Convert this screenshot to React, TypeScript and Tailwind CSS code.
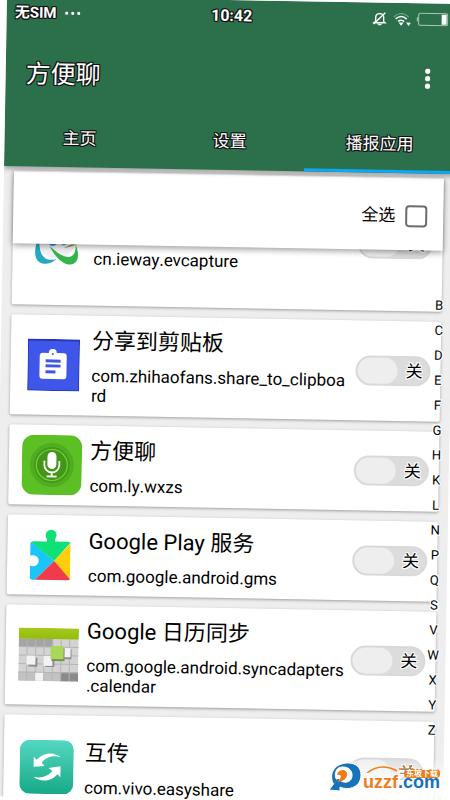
import React from "react";

const outlineDark =
  "[text-shadow:1px_0_#111,-1px_0_#111,0_1px_#111,0_-1px_#111,1px_1px_#111,-1px_-1px_#111,1px_-1px_#111,-1px_1px_#111]";
const outlineLight =
  "[text-shadow:1px_0_#fff,-1px_0_#fff,0_1px_#fff,0_-1px_#fff,1px_1px_#fff,-1px_-1px_#fff,1px_-1px_#fff,-1px_1px_#fff]";

const tabs = ["主页", "设置", "播报应用"];

const letters = "BCDEFGHKLNPQSVWXYZ".split("");

const CaptureIcon = () => (
  <svg viewBox="0 0 60 60" className="h-[60px] w-[60px]" aria-hidden="true">
    <circle cx="31" cy="30" r="20" fill="#eef0f1" />
    <path d="M5 24Q12 37 22 36Q11 33 5 24Z" fill="#d5702e" />
    <path d="M57 23Q50 35 38 40Q51 37 57 33Z" fill="#a98532" />
    <path d="M14 26C7 43 8 55 19 56C24 56 28 54 31 51C18 55 12 46 14 26Z" fill="#25a9bd" />
    <path d="M24 38C32 54 43 59 49 55C54 51 53 44 50 36C51 51 41 54 24 38Z" fill="#35b34c" />
    <path d="M23 36Q27 40 31 36L29 33H24Z" fill="#3490d5" />
    <path d="M36 34h4v3h-4z" fill="#3490d5" />
  </svg>
);

const ClipboardIcon = () => (
  <svg viewBox="0 0 52 52" className="h-[52px] w-[52px]" aria-hidden="true">
    <rect width="52" height="52" fill="#2536b4" />
    <rect x="1" y="2" width="50" height="49" fill="#3f56ea" />
    <path
      d="M15 14h6a4 4 0 0 1 8 0h7a3 3 0 0 1 3 3v20a3 3 0 0 1-3 3H15a3 3 0 0 1-3-3V17a3 3 0 0 1 3-3Z"
      fill="#fff"
    />
    <circle cx="25" cy="15" r="1" fill="#3f56ea" />
    <path d="M18 22h15M18 27h15M18 33h10" stroke="#3f56ea" strokeWidth="3" />
  </svg>
);

const MicIcon = () => (
  <svg viewBox="0 0 60 60" className="h-[60px] w-[60px]" aria-hidden="true">
    <rect width="60" height="60" rx="12" fill="#5cbf24" />
    <circle cx="30" cy="30" r="22" fill="#50ac20" />
    <circle cx="30" cy="30" r="18" fill="#449a1b" />
    <circle cx="30" cy="30" r="15.500" fill="#429719" stroke="#76cf3b" strokeWidth="1.200" />
    <rect x="25.500" y="17" width="9" height="17" rx="4.500" fill="#fff" />
    <path d="M22.500 26v4a7.500 7.500 0 0 0 15 0v-4M30 37.500v4M25 41.500h10" fill="none" stroke="#fff" strokeWidth="1.800" />
  </svg>
);

const PlayServicesIcon = () => (
  <svg viewBox="0 0 42 52" className="h-[52px] w-[42px]" aria-hidden="true">
    <path
      d="M1 15a2 2 0 0 1 1-2L25 32L6 51H3a2 2 0 0 1-2-2V37q1 .5 3 .5a5.500 5.500 0 1 0 0-11q-2 0-3 .5Z"
      fill="#19c5fb"
    />
    <path d="M2 13.500q1-1 2-1H17.500V10a5.500 5.500 0 1 1 8 0v2.500H39q1 0 2 1L25 32Z" fill="#10e078" />
    <path d="M41 14v35q0 1-1 2L25 32Z" fill="#fdce0b" />
    <path d="M6 51L25 32L41 50q-1 1-2 1Z" fill="#f13a4c" />
  </svg>
);

const CalendarSyncIcon = () => (
  <svg viewBox="0 0 60 54" className="h-[54px] w-[60px]" aria-hidden="true">
    <defs>
      <linearGradient id="calGreen" x1="0" y1="0" x2="0" y2="1">
        <stop offset="0" stopColor="#a5c91b" />
        <stop offset="1" stopColor="#93bd0c" />
      </linearGradient>
    </defs>
    <rect y="1" width="60" height="52" rx="1" fill="#d2d3d2" />
    <rect y="11" width="34" height="8" fill="#a3a4a3" />
    <rect x="42" y="44" width="18" height="9" fill="#8a8b8a" />
    <rect y="44" width="42" height="9" fill="#c1c2c1" />
    <path
      d="M0 19h60M0 27.500h60M0 36h60M0 44.500h60M8.500 11v42M17 11v42M25.500 11v42M34 11v42M42.500 11v42M51 11v42"
      stroke="#b4b5b4"
      strokeWidth="1"
    />
    <path d="M10 30h9v9h-9zM27 30h9v9h-9zM45 21h8v10h-8z" fill="#8d8e8d" />
    <path d="M8 28h9v9H8zM25 28h9v10h-9zM44 20h8v9h-8zM17 45h8v8h-8z" fill="#f2f3f2" />
    <rect x="33" y="20" width="13" height="13" fill="#7b8f5c" />
    <rect x="32" y="18" width="13" height="13" fill="#a9d759" />
    <rect width="60" height="11" rx="1" fill="url(#calGreen)" />
  </svg>
);

const EasyShareIcon = () => (
  <svg viewBox="0 0 54 54" className="h-[54px] w-[54px]" aria-hidden="true">
    <defs>
      <linearGradient id="shareTeal" x1="0" y1="0" x2="0" y2="1">
        <stop offset="0" stopColor="#55d7c1" />
        <stop offset="1" stopColor="#16aa87" />
      </linearGradient>
    </defs>
    <rect width="54" height="54" rx="10" fill="url(#shareTeal)" />
    <path d="M14 17l3 3C23 13 33 11 41 17C33 15 26 17 22 23l3 3L14 27Z" fill="#fff" />
    <path d="M41 38l-3-3C32 42 22 44 14 38C22 40 29 37 33 32l-4-3L41 27Z" fill="#fff" transform="translate(0 -1)" />
  </svg>
);

const apps = [
  { name: "EV录屏", id: "cn.ieway.evcapture", icon: <CaptureIcon />, size: "min-h-[134px]" },
  { name: "分享到剪贴板", id: "com.zhihaofans.share_to_clipboard", icon: <ClipboardIcon />, size: "" },
  { name: "方便聊", id: "com.ly.wxzs", icon: <MicIcon />, size: "" },
  { name: "Google Play 服务", id: "com.google.android.gms", icon: <PlayServicesIcon />, size: "" },
  { name: "Google 日历同步", id: "com.google.android.syncadapters.calendar", icon: <CalendarSyncIcon />, size: "" },
  { name: "互传", id: "com.vivo.easyshare", icon: <EasyShareIcon />, size: "min-h-[104px]" },
];

// A line may also end right before a dot, which break-all alone does not allow
const PackageName = ({ id }: { id: string }) => (
  <p className="break-all text-[17px] leading-5">
    {id.split(".").map((part, i) => (
      <React.Fragment key={i}>
        {i > 0 && <wbr />}
        {i > 0 ? `.${part}` : part}
      </React.Fragment>
    ))}
  </p>
);

const StatusBar = () => (
  <div className="grid h-8 grid-cols-3 items-center px-2 text-white">
    <div className="flex items-center gap-2">
      <span className={`text-[15px] font-bold ${outlineDark}`}>无SIM</span>
      <svg viewBox="0 0 16 4" className="h-1 w-4" fill="currentColor" aria-hidden="true">
        <circle cx="2" cy="2" r="1.600" />
        <circle cx="8" cy="2" r="1.600" />
        <circle cx="14" cy="2" r="1.600" />
      </svg>
    </div>
    <span className={`text-center text-base font-bold ${outlineDark}`}>10:42</span>
    <div className="flex items-center justify-end gap-1.5">
      <svg viewBox="0 0 14 14" className="h-3.5 w-3.5" fill="none" stroke="currentColor" aria-hidden="true">
        <path d="M3 10V6Q3 2 7 2Q11 2 11 6V10L12.500 11H1.500Z" strokeWidth="1.400" />
        <path d="M1 12.500L12.500 1" strokeWidth="1.400" />
        <path d="M5.500 12.500h3l-1.500 1.200Z" fill="currentColor" />
      </svg>
      <svg viewBox="0 0 18 14" className="h-3.5 w-[18px]" fill="none" stroke="currentColor" aria-hidden="true">
        <path d="M1 5Q8.500-2 16 5" strokeWidth="1" opacity="0.400" />
        <path d="M3 7Q8.500 2 14 7M5.500 9.500Q8.500 7 11.500 9.500" strokeWidth="1.600" />
        <path d="M7 11h3l-1.500 2ZM14.500 11h3l-1.500 2Z" fill="currentColor" />
      </svg>
      <svg viewBox="0 0 32 14" className="h-3.5 w-8" fill="none" aria-hidden="true">
        <rect x="2" y="1" width="29" height="12" rx="1.500" stroke="#a9c7b5" />
        <path d="M.5 5v4" stroke="#a9c7b5" strokeWidth="1.500" />
        <rect x="25" y="2" width="5" height="10" fill="#fff" />
      </svg>
    </div>
  </div>
);

const Header = () => (
  <header className="relative z-20 bg-[#2c704b] shadow-[0_3px_4px_rgba(0,0,0,0.3)]">
    <StatusBar />
    <div className="flex h-20 items-center justify-between px-5 pt-2">
      <h1 className={`pt-1 text-[25px] leading-8 text-white ${outlineDark}`}>方便聊</h1>
      <button type="button" aria-label="更多" className="flex h-6 w-4 items-center justify-center text-white">
        <svg viewBox="0 0 6 22" className="h-[22px] w-1.5" fill="currentColor" aria-hidden="true">
          <circle cx="3" cy="2.700" r="2.600" />
          <circle cx="3" cy="10.200" r="2.600" />
          <circle cx="3" cy="17.700" r="2.600" />
        </svg>
      </button>
    </div>
    <nav className="grid h-[58px] grid-cols-3">
      {tabs.map((tab, i) => (
        <button
          key={tab}
          type="button"
          className={`border-b-[3px] pt-1 text-[17px] text-white ${outlineDark} ${
            i === 2 ? "border-[#0ca8f6]" : "border-transparent"
          }`}
        >
          {tab}
        </button>
      ))}
    </nav>
  </header>
);

const Toggle = ({ label }: { label: string }) => (
  <button
    type="button"
    role="switch"
    aria-checked="false"
    aria-label={label}
    className="flex h-[30px] w-[75px] shrink-0 items-center justify-between rounded-full border-2 border-[#d9d9d9] bg-[#dcdcdc] pr-1.5"
  >
    <span className="h-full w-10 rounded-full bg-[#eeeeee]" />
    <span className={`text-[17px] leading-none text-black ${outlineLight}`}>关</span>
  </button>
);

const Watermark = () => (
  <div className="absolute bottom-0 right-0 z-30 flex items-center bg-linear-to-b from-white/0 via-white/80 to-white/90 pb-2 pr-2.5 pt-1 font-['Liberation_Sans','Noto_Sans_CJK_SC',sans-serif] font-bold">
    <svg viewBox="0 0 34 30" className="h-[30px] w-[34px]" aria-hidden="true">
      <path
        d="M6 7C10-1 32-3 32 13C32 25 20 29 11 25L11 29L0 28L9 16C14 23 24 21 23 12C22 5 14 3 6 7Z"
        fill="#1672b9"
        stroke="#fff"
        strokeWidth="1"
      />
      <path d="M5 22C0 12 6 2 15 3C8 5 5 9 6 15Q7 19 9 17Z" fill="#1672b9" />
      <path d="M8 13C9 8 16 6 18 11C19 16 14 20 8 20C12 17 14 12 8 13Z" fill="#f07c19" />
    </svg>
    <div className="flex flex-col items-end">
      <svg viewBox="0 0 77 8" className="-mb-1 h-2 w-full" fill="none" stroke="#f07c19" aria-hidden="true">
        <path d="M4 8Q18-3 34 6" strokeWidth="1.500" />
        <path d="M40 1l2 2M47 0v3M36 4h3" strokeWidth="1.500" />
      </svg>
      <span className="relative z-10 rounded-sm bg-[#f07c19] px-0.5 text-[8px] leading-[9px] text-white">东坡下载</span>
      <span className={`-mt-1 text-lg leading-4 text-[#1672b9] ${outlineLight}`}>
        <span className="text-[#f07c19]">uzzf</span>.com
      </span>
    </div>
  </div>
);

export default function App() {
  return (
    <div className="relative h-screen overflow-hidden bg-white font-['Roboto','Noto_Sans_CJK_SC',sans-serif] text-black">
      <div className="flex h-full rotate-1 flex-col overflow-hidden bg-[#eeeeee]">
        <Header />

        <main className="relative min-h-0 flex-1">
          <label className="relative z-10 mx-2.5 mt-[5px] flex h-[72px] items-center justify-end gap-2.5 bg-white pr-4 pt-1 text-[17px] shadow-[0_2px_6px_rgba(0,0,0,0.4)]">
            全选
            <input
              type="checkbox"
              className="h-[22px] w-[22px] appearance-none rounded-sm border-2 border-[#6b6b6b] bg-white"
            />
          </label>

          <ul className="-mt-[73px] flex flex-col gap-2.5 px-2.5">
            {apps.map((app) => (
              <li
                key={app.id}
                className={`flex items-center rounded-xs bg-white py-2.5 pl-[13px] pr-2.5 shadow-[0_1px_3px_rgba(0,0,0,0.35)] ${app.size}`}
              >
                <div className="-my-2.5 flex w-[60px] shrink-0 items-center justify-center">{app.icon}</div>
                <div className="min-w-0 flex-1 pl-2 pr-[5px]">
                  <h2 className="mb-2 text-[22px] leading-8">{app.name}</h2>
                  <PackageName id={app.id} />
                </div>
                <Toggle label={app.name} />
              </li>
            ))}
          </ul>

          <nav className="absolute right-0 top-[119px] z-10 flex w-[25px] flex-col">
            {letters.map((letter) => (
              <a
                key={letter}
                href={`#${letter}`}
                className={`h-[25px] text-center text-[13px] leading-[25px] ${outlineLight}`}
              >
                {letter}
              </a>
            ))}
          </nav>
        </main>
      </div>

      <Watermark />
    </div>
  );
}
